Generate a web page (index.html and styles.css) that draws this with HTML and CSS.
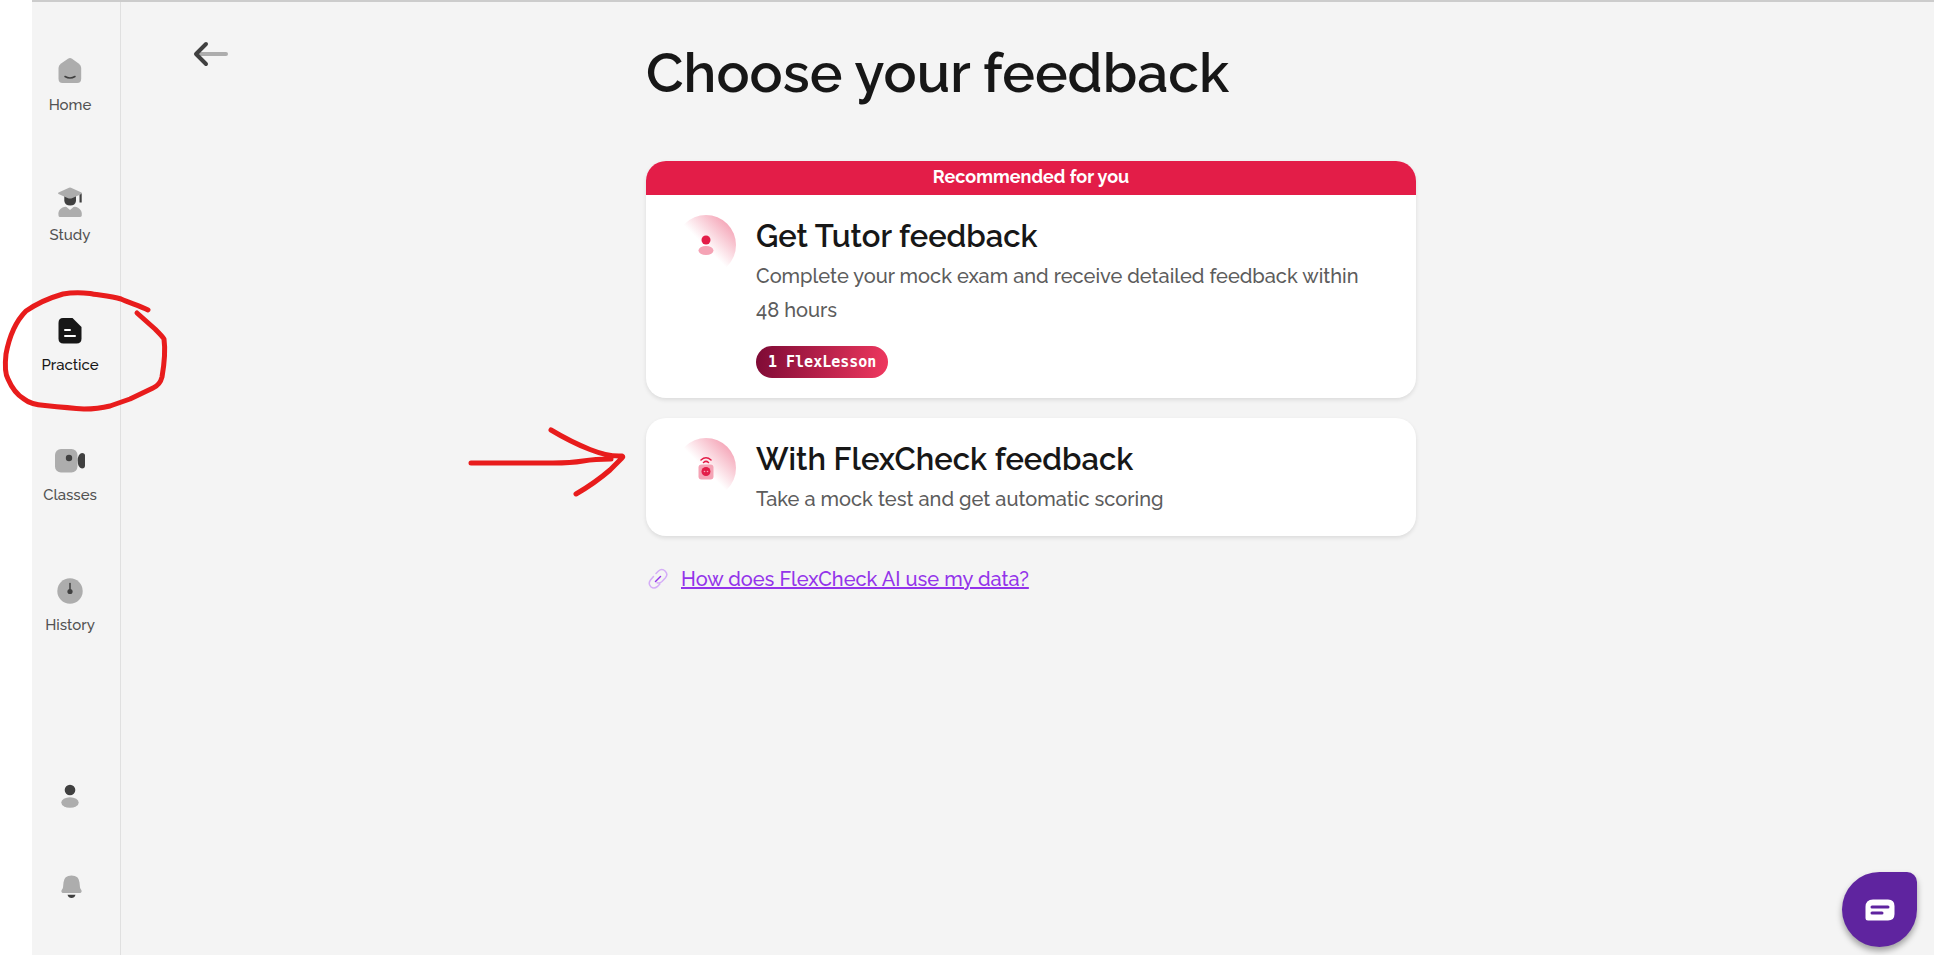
FILE: index.html
```html
<!doctype html>
<html lang="en">
<head>
	<meta charset="UTF-8">
	<meta name="viewport" content="width=device-width, initial-scale=1">
	<title>Choose your feedback</title>
	<link rel="stylesheet" href="styles.css">
</head>
<body>
	<div class="app">
		<aside class="sidebar">
			<nav class="nav">
				<a href="#" class="nav-item">
					<svg class="icon" viewBox="0 0 32 32">
						<path class="light" d="M14 3.700q2-1.200 4 0l7 5q2.200 1.700 2.200 4.300v10.500q0 4.500-4 4.500H8.500q-4 0-4-4.500V13q0-2.600 2.200-4.300z"/>
						<path class="stroke-dark" d="M11 21.500q5 3 10 0"/>
					</svg>
					<span>Home</span>
				</a>
				<a href="#" class="nav-item">
					<svg class="icon" viewBox="0 0 32 32">
						<path class="dark" d="M10.300 10h11.700v6q-.7 4.500-5.800 4.500t-5.900-4.500z"/>
						<path class="light" d="M4.500 7.500 15 2.800q1-.5 2 0l10.500 4.700q1 .8 0 1.500L18.500 13q-2.500 1.200-5 0L4.500 9q-1-.7 0-1.500z"/>
						<path class="dark" d="M25.500 10l2.200-1.500V17.500h-2.200z"/>
						<path class="light" d="M4.500 30.500q-1-5.500 4-8 3-1.300 4-.5l3.500 3 3.500-3q2-.8 4.500.8 4.500 2.700 3.800 7.700-.3 1.500-2 1.500H6q-1.300 0-1.500-1.500z"/>
					</svg>
					<span>Study</span>
				</a>
				<a href="#" class="nav-item active">
					<svg class="icon" viewBox="0 0 32 32">
						<path class="black" d="M9 3h9.500L27.500 12v11.500q0 5-5 5H9.500q-5 0-5-5V8q0-5 4.500-5z"/>
						<path class="stroke-white" d="M11 15h5M11 21h10"/>
					</svg>
					<span>Practice</span>
				</a>
				<a href="#" class="nav-item">
					<svg class="icon" viewBox="0 0 32 32">
						<rect class="light" x="1" y="4" width="22.500" height="23.500" rx="6"/>
						<circle class="dark" cx="15" cy="13" r="3.200"/>
						<path class="dark" d="M31 10.500v10q0 3-3 3-4.300-.5-4.300-8 0-6.500 4.300-7.500 3 0 3 2.500z"/>
					</svg>
					<span>Classes</span>
				</a>
				<a href="#" class="nav-item">
					<svg class="icon" viewBox="0 0 32 32">
						<circle class="light" cx="16" cy="16" r="12.700"/>
						<circle class="dark" cx="16" cy="16.500" r="2.600"/>
						<path class="stroke-dark" d="M16 8.500V16"/>
					</svg>
					<span>History</span>
				</a>
			</nav>
			<div class="nav-bottom">
				<a href="#" class="nav-item" aria-label="Profile">
					<svg class="icon" viewBox="0 0 32 32">
						<circle class="dark" cx="16" cy="10" r="5.300"/>
						<ellipse class="light" cx="16" cy="22.500" rx="8.700" ry="5.300"/>
					</svg>
				</a>
				<a href="#" class="nav-item" aria-label="Notifications">
					<svg class="icon" viewBox="0 0 32 32">
						<path class="light" d="M9.500 12.500q.5-7 8-7t8 7l.5 5q.2 1 1 2 1.500 2-.5 3.500h-18q-2-1.500-.5-3.500.9-1 1-2z"/>
						<path class="dark" d="M13.500 24.800h8q-1 3.200-4 3.200t-4-3.200z"/>
					</svg>
				</a>
			</div>
		</aside>

		<main class="main">
			<a href="#" class="back" aria-label="Back">
				<svg width="36" height="26" viewBox="0 0 36 26">
					<path class="back-line" d="M6 13h27"/>
					<path class="back-head" d="M13 3 3 13l10 10"/>
				</svg>
			</a>
			<div class="content">
				<h1 class="title">Choose your feedback</h1>

				<div class="cards">
					<a href="#" class="card">
						<div class="card-banner">Recommended for you</div>
						<div class="card-body">
							<div class="card-icon">
								<svg width="20" height="24" viewBox="0 0 20 24">
									<circle class="pink-dark" cx="10" cy="7" r="4.500"/>
									<ellipse class="pink-light" cx="10" cy="17.500" rx="7.500" ry="4.500"/>
								</svg>
							</div>
							<div class="card-text">
								<h2 class="card-title">Get Tutor feedback</h2>
								<p class="card-desc">Complete your mock exam and receive detailed feedback within 48 hours</p>
								<span class="pill">1 FlexLesson</span>
							</div>
						</div>
					</a>
					<a href="#" class="card">
						<div class="card-body">
							<div class="card-icon">
								<svg width="20" height="24" viewBox="0 0 20 24">
									<rect class="pink-light" x="2.500" y="8.500" width="15" height="15" rx="3"/>
									<circle class="pink-dark" cx="10" cy="15.500" r="4.500"/>
									<circle class="pink-light" cx="8.500" cy="15.500" r=".8"/>
									<circle class="pink-light" cx="11.500" cy="15.500" r=".8"/>
									<path class="pink-line" d="M5 4q5-4.500 10 0M7.500 6.500q2.500-2.200 5 0"/>
								</svg>
							</div>
							<div class="card-text">
								<h2 class="card-title">With FlexCheck feedback</h2>
								<p class="card-desc">Take a mock test and get automatic scoring</p>
							</div>
						</div>
					</a>
				</div>

				<div class="info">
					<svg width="24" height="24" viewBox="0 0 24 24">
						<path class="link-light" d="M10 6.500l2.500-2.500q3.500-3 6.800.2 3 3.300.2 6.600l-3.500 3.700q-2.300 2.200-5 1.200M7.500 9.500l-3 3.500q-2.700 3.500.3 6.700 3.200 2.700 6.500 0l2.500-2.700"/>
						<path class="link-dark" d="M9.500 14.500l5-5"/>
					</svg>
					<a href="#" class="info-link">How does FlexCheck AI use my data?</a>
				</div>
			</div>
		</main>
	</div>

	<button class="chat" type="button" aria-label="Open chat">
		<svg width="32" height="24" viewBox="0 0 32 24">
			<path fill="#fff" d="M9 1.500h15q6.500 0 6.500 6.500v8q0 6.500-6.500 6.500H4q-2.500 0-2.500-2.500V9Q1.500 1.500 9 1.500z"/>
			<path class="chat-line" d="M8 9h16M8 15h10"/>
		</svg>
	</button>

	<!-- hand drawn marks -->
	<svg class="mark mark-circle" width="170" height="130" viewBox="0 0 170 130">
		<path d="M148 21C140 17 130 14 121 10 111 7 97 6 90 4.500Q75 3 63 5 42 11 26 22C16 32 9 49 6 65Q4 83 8 90 14 104 24 110C30 115 38 116 45 116.500Q70 119 84 120 98 120 110 117L130 110 153 99Q160 96 162 88 166 65 164 50 163 48 155 40L137 24"/>
	</svg>
	<svg class="mark mark-arrow" width="170" height="80" viewBox="0 0 170 80">
		<path d="M10 38h82Q110 38 122 36T150 34M90 5q20 12 39 19.500T161 31q2 1-2 4l-10 10q-15 13-34 24"/>
	</svg>
</body>
</html>
```

FILE: styles.css
```css
*{box-sizing:border-box;}
body{margin:0;padding-left:32px;background:#fff;color:#171717;font-family:Raleway,Lato,"Liberation Sans",sans-serif;font-weight:500;}
a{color:inherit;text-decoration:none;}
h1,h2,p{margin:0;}
svg{display:block;}

.app{display:flex;min-height:100vh;background:#f4f4f4;border-top:2px solid #ccc;}

/* sidebar */
.sidebar{display:flex;flex-direction:column;justify-content:space-between;width:89px;padding:53px 12px 53px 0;border-right:1px solid #e0e0e0;}
.nav{display:flex;flex-direction:column;gap:70px;}
.nav-bottom{display:flex;flex-direction:column;gap:58px;}
.nav-item{display:flex;flex-direction:column;align-items:center;gap:8px;font-size:15px;line-height:20px;color:#525252;}
.nav-item.active{color:#171717;}
.icon{width:32px;height:32px;}
.light{fill:#adadad;}
.dark{fill:#404040;}
.black{fill:#171717;}
.stroke-dark{fill:none;stroke:#404040;stroke-width:1.5;stroke-linecap:round;}
.stroke-white{fill:none;stroke:#fff;stroke-width:2;stroke-linecap:round;}

/* content */
.main{flex:1;display:grid;grid-template-columns:1fr minmax(0,770px) 1fr;padding-left:7px;}
.back{justify-self:start;align-self:start;margin:39px 0 0 65px;}
.back-line,.back-head{fill:none;stroke-width:4;stroke-linecap:round;stroke-linejoin:round;}
.back-line{stroke:#adadad;}
.back-head{stroke:#404040;}
.content{padding-top:35px;}
.title{font-size:55px;line-height:72px;font-weight:600;}
.cards{display:flex;flex-direction:column;gap:20px;margin-top:52px;}
.card{display:block;overflow:hidden;border-radius:20px;background:#fff;box-shadow:0 2px 4px rgba(0,0,0,.1);}
.card-banner{padding-bottom:2px;background:#e31d48;color:#fff;font-size:18px;line-height:32px;font-weight:700;text-align:center;}
.card-body{display:flex;gap:20px;padding:20px 30px;}
.card-icon{flex:none;display:flex;align-items:center;justify-content:center;width:60px;height:60px;border-radius:50%;background:linear-gradient(225deg,#f4a0b3 10%,#fff 52%);}
.pink-dark{fill:#e31d48;}
.pink-light{fill:#f5a3b5;}
.pink-line{fill:none;stroke:#e31d48;stroke-width:1.5;stroke-linecap:round;}
.card-text{flex:1;}
.card-title{margin-bottom:2px;font-size:31px;line-height:42px;font-weight:600;}
.card-desc{font-size:20px;line-height:34px;color:#5c5c5c;}
.pill{display:inline-block;margin-top:19px;padding:0 12px;border-radius:16px;background:linear-gradient(100deg,#7d0a35,#f0385f);color:#fff;font:bold 15px/32px "DejaVu Sans Mono",monospace;vertical-align:top;}

.info{display:flex;align-items:center;gap:11px;margin-top:26px;font-size:20px;line-height:34px;}
.info-link{color:#9333ea;text-decoration:underline;text-decoration-thickness:2px;}
.link-light,.link-dark{fill:none;stroke-width:1.5;stroke-linecap:round;}
.link-light{stroke:#d4adf7;}
.link-dark{stroke:#9333ea;}

.chat{position:fixed;right:17px;bottom:8px;display:flex;align-items:center;justify-content:center;width:75px;height:75px;padding:0;border:0;border-radius:50% 10px 50% 50%;background:#5f249f;box-shadow:0 4px 6px rgba(0,0,0,.35);cursor:pointer;}
.chat-line{fill:none;stroke:#5f249f;stroke-width:3;stroke-linecap:round;}

.mark{position:absolute;pointer-events:none;fill:none;stroke:#e81c1c;stroke-width:5;stroke-linecap:round;stroke-linejoin:round;}
.mark-circle{left:0;top:289px;}
.mark-arrow{left:461px;top:425px;}
```
